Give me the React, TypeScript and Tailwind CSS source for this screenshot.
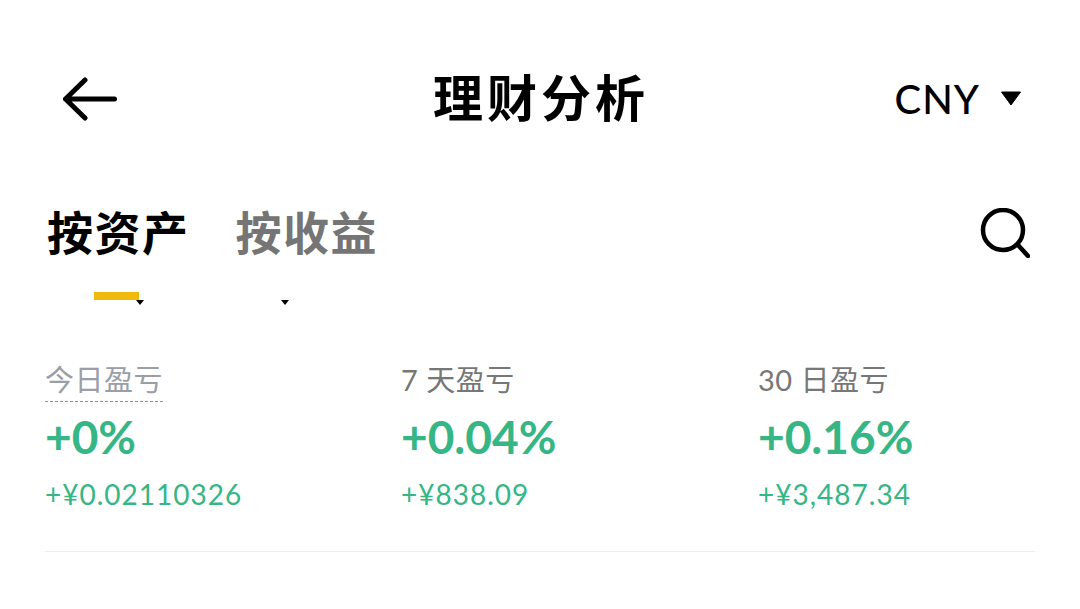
const FONT = "font-['Lato','Noto_Sans_CJK_SC',sans-serif]";

const STATS = [
  { label: "今日盈亏", pct: "+0%", amount: "+¥0.02110326", dashed: true },
  { label: "7 天盈亏", pct: "+0.04%", amount: "+¥838.09", dashed: false },
  { label: "30 日盈亏", pct: "+0.16%", amount: "+¥3,487.34", dashed: false },
];

function Caret({ className }: { className: string }) {
  return <div className={`h-0 w-0 border-x-[4px] border-t-[5px] border-x-transparent border-t-black ${className}`} />;
}

export default function App() {
  return (
    <div className={`h-[609px] w-[1080px] overflow-hidden bg-white ${FONT}`}>
      <header className="mt-[68px] grid h-[60px] grid-cols-[1fr_auto_1fr] items-center pl-[63px] pr-[58px]">
        <svg width="54" height="44" viewBox="0 0 54 44" fill="none" stroke="#000" strokeWidth="5" strokeLinecap="round" strokeLinejoin="round" className="mt-[1px]">
          <path d="M2.5 22H51.5M22 3 2.5 22 22 41" />
        </svg>
        <div className="ml-[-3px] text-[50px] leading-none font-bold tracking-[4px] text-black">理财分析</div>
        <div className="flex items-center justify-end gap-[20px]">
          <span className="mt-[2px] text-[40px] leading-none font-medium tracking-[1px] text-black">CNY</span>
          <svg width="22" height="15" viewBox="0 0 22 15" className="mt-[1px] shrink-0">
            <path d="M1.5 1h19L11 14z" fill="#000" stroke="#000" strokeLinejoin="round" />
          </svg>
        </div>
      </header>

      <div className="mt-[72px] flex items-center justify-between pl-[47px] pr-[50px]">
        <div className="flex gap-[46px] text-[46px] leading-[66px] font-bold tracking-[1.5px]">
          <span className="text-black">按资产</span>
          <span className="text-[#757575]">按收益</span>
        </div>
        <svg width="50" height="50" viewBox="0 0 50 50" fill="none" stroke="#000" strokeWidth="4.5" strokeLinecap="round">
          <circle cx="23" cy="22" r="20" />
          <path d="M38 37 48 48" />
        </svg>
      </div>

      <div className="mt-[24px] flex h-[10px] items-end">
        <div className="ml-[94px] h-[8px] w-[45px] bg-[#f0b90b]" />
        <Caret className="mb-[-5px] ml-[-3px]" />
        <Caret className="mb-[-5px] ml-[137px]" />
      </div>

      <div className="mx-[45px] mt-[60px] grid grid-cols-[356px_357px_1fr] border-b border-[#eeeeee] pb-[40px]">
        {STATS.map((s) => (
          <div key={s.label}>
            <div className="inline-block h-[36px]">
              <div className={`pb-[2px] text-[29px] leading-[39px] tracking-[0.5px] ${s.dashed ? "border-b border-dashed border-[#8a8f99] text-[#9a9ea6]" : "text-[#777777]"}`}>
                {s.label}
              </div>
            </div>
            <div className="mt-[15px] text-[46px] leading-[50px] font-bold text-[#35b684]">{s.pct}</div>
            <div className="mt-[15px] text-[28px] leading-[34px] tracking-[1px] text-[#35b684]">{s.amount}</div>
          </div>
        ))}
      </div>
    </div>
  );
}
